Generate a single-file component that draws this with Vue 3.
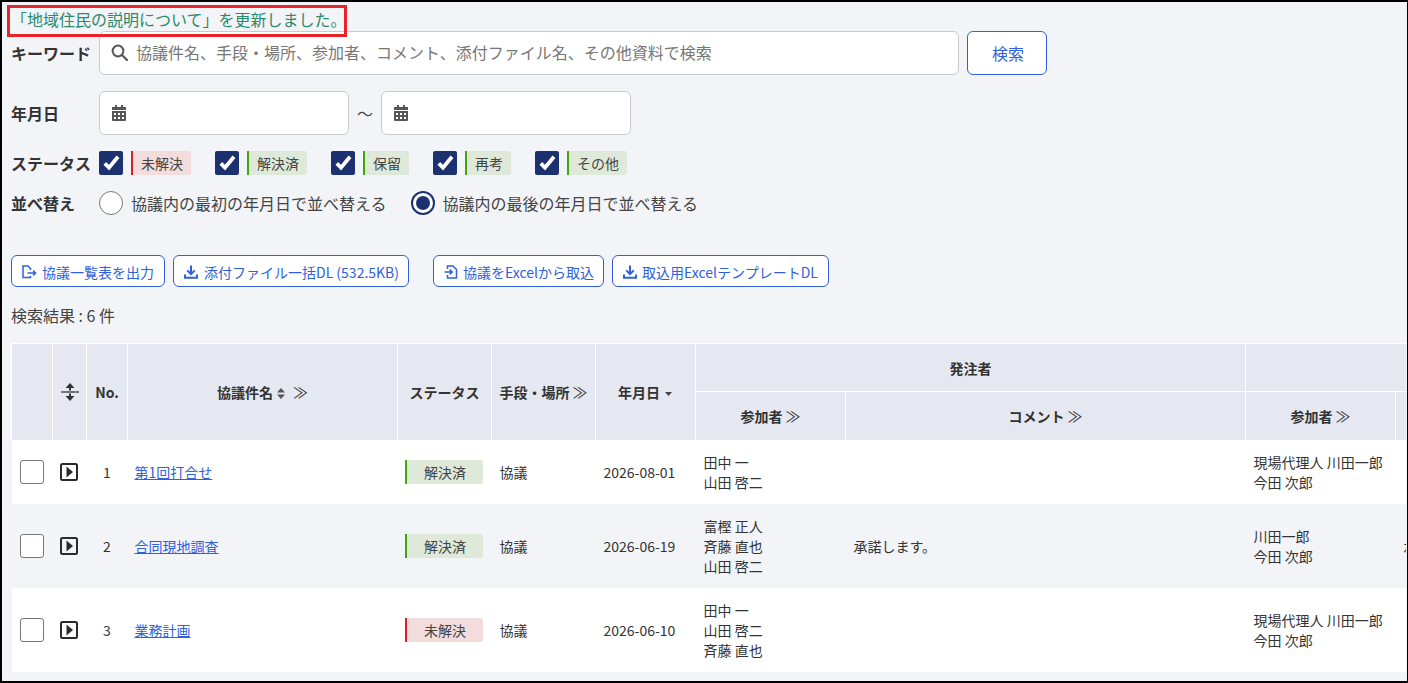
<script setup>
const statuses = [
  { label: '未解決', red: true },
  { label: '解決済' },
  { label: '保留' },
  { label: '再考' },
  { label: 'その他' }
]

const rows = [
  { no: 1, name: '第1回打合せ', status: '解決済', means: '協議', date: '2026-08-01', a: ['田中 一', '山田 啓二'], comment: '', b: ['現場代理人 川田一郎', '今田 次郎'], note: '', tall: false },
  { no: 2, name: '合同現地調査', status: '解決済', means: '協議', date: '2026-06-19', a: ['富樫 正人', '斉藤 直也', '山田 啓二'], comment: '承諾します。', b: ['川田一郎', '今田 次郎'], note: '承諾します。', tall: true },
  { no: 3, name: '業務計画', status: '未解決', means: '協議', date: '2026-06-10', a: ['田中 一', '山田 啓二', '斉藤 直也'], comment: '', b: ['現場代理人 川田一郎', '今田 次郎'], note: '', tall: true }
]
</script>

<template>
  <div class="page">
    <div class="flash">「地域住民の説明について」を更新しました。</div>
    <div class="flash-mark"></div>

    <div class="form-row row-keyword">
      <label class="row-label">キーワード</label>
      <div class="input search-input">
        <svg class="search-icon" width="17" height="17" viewBox="0 0 17 17">
          <circle cx="7" cy="7" r="5.4" fill="none" stroke="#555" stroke-width="2" />
          <path d="M11 11 16 16" stroke="#555" stroke-width="2.2" stroke-linecap="round" />
        </svg>
        <span class="placeholder">協議件名、手段・場所、参加者、コメント、添付ファイル名、その他資料で検索</span>
      </div>
      <button class="search-btn">検索</button>
    </div>

    <div class="form-row row-date">
      <label class="row-label">年月日</label>
      <div class="input date-input">
        <svg width="14" height="16" viewBox="0 0 14 16"><use href="#cal" /></svg>
      </div>
      <span class="tilde">～</span>
      <div class="input date-input">
        <svg width="14" height="16" viewBox="0 0 14 16"><use href="#cal" /></svg>
      </div>
    </div>

    <div class="form-row row-status">
      <label class="row-label">ステータス</label>
      <div v-for="s in statuses" :key="s.label" class="status-item">
        <span class="check">
          <svg width="24" height="24" viewBox="0 0 24 24">
            <path d="M5.8 12.4 10 16.6 19 5.8" fill="none" stroke="#fff" stroke-width="3.8" />
          </svg>
        </span>
        <span class="tag" :class="{ red: s.red }">{{ s.label }}</span>
      </div>
    </div>

    <div class="form-row row-sort">
      <label class="row-label">並べ替え</label>
      <span class="radio"></span>
      <span class="radio-text">協議内の最初の年月日で並べ替える</span>
      <span class="radio on"></span>
      <span class="radio-text">協議内の最後の年月日で並べ替える</span>
    </div>

    <div class="actions">
      <button class="btn">
        <svg width="15" height="14" viewBox="0 0 15 14" fill="none" stroke="#2f5fdc" stroke-width="1.5">
          <path d="M8.5 11v1.6H1V1h5l2.5 2.5V5" />
          <path d="M5.5 8h8M11 5.5 13.6 8 11 10.5" />
        </svg>
        協議一覧表を出力
      </button>
      <button class="btn btn-tight">
        <svg width="14" height="14" viewBox="0 0 14 14"><use href="#dl" /></svg>
        <span class="btn-gap">添付ファイル一括DL (532.5KB)</span>
      </button>
      <button class="btn btn-tight btn-import">
        <svg width="14" height="14" viewBox="0 0 14 14" fill="none" stroke="#2f5fdc" stroke-width="1.5">
          <path d="M3.5 4V1h5.5l3.5 3.5v8.5h-9v-3" />
          <path d="M.5 7h7.5M5.6 4.6 8.2 7 5.6 9.4" />
        </svg>
        協議をExcelから取込
      </button>
      <button class="btn">
        <svg width="14" height="14" viewBox="0 0 14 14"><use href="#dl" /></svg>
        <span>取込用ExcelテンプレートDL</span>
      </button>
    </div>

    <div class="result-count">検索結果 : 6 件</div>

    <div class="table-wrap">
      <table>
        <colgroup>
          <col style="width: 41px" />
          <col style="width: 34px" />
          <col style="width: 41px" />
          <col style="width: 270px" />
          <col style="width: 94px" />
          <col style="width: 104px" />
          <col style="width: 100px" />
          <col style="width: 150px" />
          <col style="width: 400px" />
          <col style="width: 150px" />
          <col style="width: 150px" />
        </colgroup>
        <thead>
          <tr class="head-top">
            <th rowspan="2"></th>
            <th rowspan="2">
              <svg width="18" height="20" viewBox="0 0 18 20" class="expand">
                <path d="M0 10h18" stroke="#444" stroke-width="1.4" />
                <path d="M9 1 13.5 6H10v2.5H8V6H4.5zM9 19 4.5 14H8v-2.5h2V14h3.5z" fill="#333" />
              </svg>
            </th>
            <th rowspan="2">No.</th>
            <th rowspan="2">
              協議件名
              <svg class="sort" width="8" height="11" viewBox="0 0 8 11"><path d="M4 0 8 4.5H0zM4 11 0 6.5h8z" fill="#555" /></svg>
              <span class="more more-wide">≫</span>
            </th>
            <th rowspan="2">ステータス</th>
            <th rowspan="2">手段・場所 <span class="more">≫</span></th>
            <th rowspan="2">
              <span class="date-head">年月日<svg class="sort-down" width="7" height="4" viewBox="0 0 7 4"><path d="M0 0h7L3.5 4z" fill="#444" /></svg></span>
            </th>
            <th colspan="2">発注者</th>
            <th colspan="2"></th>
          </tr>
          <tr class="head-sub">
            <th>参加者 <span class="more">≫</span></th>
            <th>コメント <span class="more">≫</span></th>
            <th>参加者 <span class="more">≫</span></th>
            <th></th>
          </tr>
        </thead>
        <tbody>
          <tr v-for="row in rows" :key="row.no" :class="{ tall: row.tall }">
            <td class="cell-check"><span class="row-check"></span></td>
            <td class="cell-play">
              <svg width="18" height="18" viewBox="0 0 18 18">
                <rect x="1" y="1" width="16" height="16" rx="1.5" fill="none" stroke="#2a2a2a" stroke-width="2" />
                <path d="M6.5 3.5 13 9l-6.5 5.5z" fill="#2a2a2a" />
              </svg>
            </td>
            <td class="cell-no">{{ row.no }}</td>
            <td class="cell-name"><a class="name-link" href="#">{{ row.name }}</a></td>
            <td class="cell-status"><span class="tag wide" :class="{ red: row.status === '未解決' }">{{ row.status }}</span></td>
            <td>{{ row.means }}</td>
            <td class="cell-date">{{ row.date }}</td>
            <td><div v-for="p in row.a" :key="p">{{ p }}</div></td>
            <td>{{ row.comment }}</td>
            <td><div v-for="p in row.b" :key="p">{{ p }}</div></td>
            <td>{{ row.note }}</td>
          </tr>
        </tbody>
      </table>
    </div>

    <svg width="0" height="0" class="defs">
      <defs>
        <g id="cal" fill="#555">
          <path d="M3 0h2v2h4V0h2v2h3v3H0V2h3z" />
          <path fill-rule="evenodd" d="M0 6h14v9a1 1 0 0 1-1 1H1a1 1 0 0 1-1-1zm2 2v2h2V8zm4 0v2h2V8zm4 0v2h2V8zm-8 4v2h2v-2zm4 0v2h2v-2zm4 0v2h2v-2z" />
        </g>
        <g id="dl" fill="none" stroke="#2f5fdc" stroke-width="2">
          <path d="M7 .5v8.5M3.2 5.4 7 9.2l3.8-3.8" />
          <path d="M1 9.5v3.2h12V9.5" />
        </g>
      </defs>
    </svg>
  </div>
</template>

<style scoped>
.page {
  position: relative;
  box-sizing: border-box;
  width: 1408px;
  height: 683px;
  overflow: hidden;
  border: solid #000;
  border-width: 2px 1px 2px 2px;
  background: #f2f4f8;
  color: #333;
  font-family: "Noto Sans CJK JP", "Noto Sans", sans-serif;
  font-size: 14px;
}

.flash {
  height: 29px;
  padding-left: 9px;
  line-height: 34px;
  font-size: 16px;
  color: #2b8a6b;
  white-space: nowrap;
}

.flash-mark {
  position: absolute;
  left: 5px;
  top: 3px;
  width: 334px;
  height: 26px;
  border: 3px solid #e8232a;
}

.form-row {
  display: flex;
  align-items: center;
}

.row-label {
  width: 88px;
  margin-left: 9px;
  flex: none;
  font-size: 16px;
  font-weight: 700;
  white-space: nowrap;
}

.input {
  box-sizing: border-box;
  height: 44px;
  display: flex;
  align-items: center;
  background: #fff;
  border: 1px solid #c9cbd0;
  border-radius: 6px;
}

.search-input {
  width: 860px;
  padding-left: 11px;
}

.search-icon {
  flex: none;
  margin-bottom: 1px;
}

.placeholder {
  margin-left: 8px;
  padding-bottom: 3px;
  font-size: 16px;
  color: #777;
  white-space: nowrap;
}

.search-btn {
  box-sizing: border-box;
  width: 80px;
  height: 44px;
  margin-left: 8px;
  padding: 0 0 0 2px;
  background: #fff;
  border: 1px solid #2f5fdc;
  border-radius: 6px;
  color: #2f5fdc;
  font: inherit;
  font-size: 16px;
}

.row-date {
  margin-top: 16px;
}

.date-input {
  width: 250px;
  padding-left: 12px;
}

.tilde {
  width: 32px;
  text-align: center;
  font-size: 16px;
  color: #444;
}

.row-status {
  margin-top: 16px;
  height: 24px;
}

.status-item {
  display: flex;
  align-items: center;
  margin-right: 24px;
}

.check {
  box-sizing: border-box;
  width: 24px;
  height: 24px;
  display: flex;
  align-items: center;
  justify-content: center;
  background: #1c3170;
  border-radius: 2px;
}

.tag {
  display: inline-block;
  box-sizing: border-box;
  height: 24px;
  margin-left: 8px;
  padding: 0 8px;
  line-height: 24px;
  background: #dfe9da;
  border-left: 2px solid #3fa60c;
  border-radius: 0 2px 2px 0;
  font-size: 14px;
  color: #444;
  white-space: nowrap;
}

.tag.red {
  background: #f2dcdc;
  border-left-color: #d9202a;
}

.tag.wide {
  width: 78px;
  margin-left: 0;
  padding: 0 0 0 1px;
  text-align: center;
}

.row-sort {
  margin-top: 16px;
  height: 24px;
}

.radio {
  box-sizing: border-box;
  flex: none;
  width: 24px;
  height: 24px;
  background: #fff;
  border: 1px solid #777;
  border-radius: 50%;
}

.radio.on {
  position: relative;
  margin-left: 24px;
  border: 2px solid #1c3170;
}

.radio.on::after {
  content: "";
  position: absolute;
  left: 3px;
  top: 3px;
  width: 14px;
  height: 14px;
  background: #1c3170;
  border-radius: 50%;
}

.radio-text {
  margin-left: 8px;
  font-size: 16px;
  color: #444;
  white-space: nowrap;
}

.actions {
  display: flex;
  gap: 8px;
  margin: 40px 0 0 9px;
}

.btn {
  box-sizing: border-box;
  height: 32px;
  display: flex;
  align-items: center;
  gap: 5px;
  padding: 2px 10px 0;
  background: #fff;
  border: 1px solid #2f5fdc;
  border-radius: 6px;
  color: #2f5fdc;
  font: inherit;
  font-size: 14px;
  white-space: nowrap;
}

.btn-tight {
  padding-right: 9px;
}

.btn-gap {
  margin-left: 1px;
}

.btn-import {
  margin-left: 16px;
}

.result-count {
  margin: 17px 0 0 9px;
  line-height: 22px;
  font-size: 16px;
  color: #444;
}

.table-wrap {
  width: 1395px;
  margin: 17px 0 0 9px;
  overflow: hidden;
}

table {
  table-layout: fixed;
  width: 1534px;
  border-collapse: collapse;
}

th {
  padding: 0;
  background: #e5e8f1;
  border: 1px solid #fff;
  font-size: 14px;
  font-weight: 700;
  color: #333;
  white-space: nowrap;
}

thead tr:last-child th,
th[rowspan] {
  border-bottom: 0;
}

.head-top {
  height: 48px;
}

.head-sub {
  height: 48px;
}

.more {
  font-weight: 400;
  font-size: 15px;
  line-height: 1;
}

.more-wide {
  margin-left: 8px;
}

.sort {
  margin-left: 1px;
  vertical-align: -1px;
}

.date-head {
  margin-left: -1px;
}

.sort-down {
  margin-left: 5px;
  vertical-align: 2px;
}

.expand {
  display: block;
  margin: 0 auto;
}

tbody tr {
  height: 64px;
  background: #fff;
}

tbody tr.tall {
  height: 84px;
}

tbody tr:nth-child(even) {
  background: #f2f4f8;
}

td {
  padding: 0 8px;
  line-height: 20px;
  font-size: 14px;
  color: #333;
  white-space: nowrap;
}

.cell-check {
  padding-left: 8px;
  padding-right: 0;
}

.row-check {
  display: block;
  box-sizing: border-box;
  width: 24px;
  height: 24px;
  background: #fff;
  border: 1px solid #777;
  border-radius: 3px;
}

.cell-play {
  padding: 0 0 0 7px;
}

.cell-play svg {
  display: block;
}

.cell-no {
  text-align: center;
}

.cell-name {
  padding-left: 7px;
}

.name-link {
  color: #2f5fdc;
}

.cell-status {
  padding: 0 8px 0 7px;
}

.cell-date {
  padding-left: 8px;
  padding-right: 0;
}

.defs {
  position: absolute;
}
</style>

<style>
html,
body {
  margin: 0;
  overflow: hidden;
}
</style>
